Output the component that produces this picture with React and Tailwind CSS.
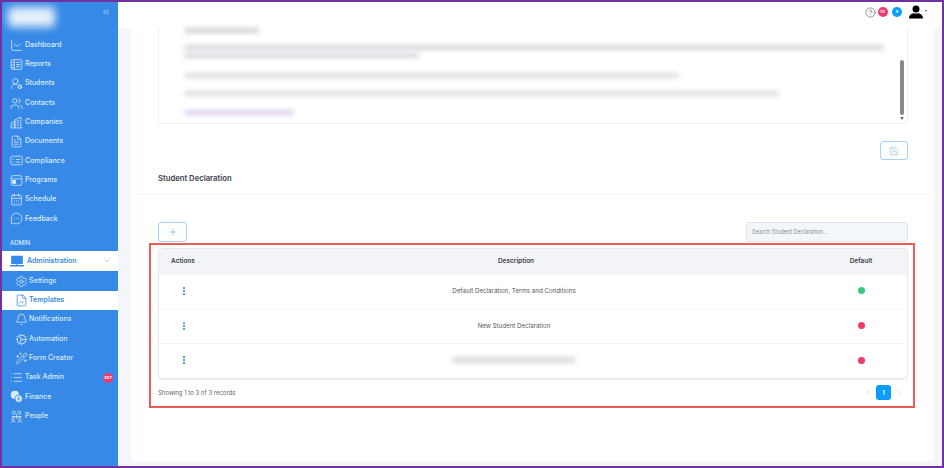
import React from "react";
import {
  Bell,
  CalendarDays,
  ChartLine,
  ChevronDown,
  ChevronLeft,
  ChevronRight,
  ChevronsLeft,
  ChevronUp,
  CircleHelp,
  Cog,
  FileChartLine,
  FileText,
  List,
  MessageCircleMore,
  Plus,
  Save,
  Settings,
  UserRoundCog,
  Users,
  WandSparkles,
} from "lucide-react";

// icons the packages don't have in the same shape
const ReportsIcon = ({ size, strokeWidth, className }) => (
  <svg width={size} height={size} viewBox="0 0 24 24" fill="none" stroke="currentColor" strokeWidth={strokeWidth} className={className}>
    <rect x="2" y="3" width="20" height="18" rx="2.5" />
    <path d="M8 3v18M2 8h6M2 13h6M2 18h6M11 8h8M11 12h8M11 16h8" />
  </svg>
);

const CompanyIcon = ({ size, strokeWidth, className }) => (
  <svg width={size} height={size} viewBox="0 0 24 24" fill="none" stroke="currentColor" strokeWidth={strokeWidth} className={className}>
    <path d="M2 22V13l7-4v13M9 22V7l11-5v20M1 22h22" />
    <path d="M4.500 15h2M4.500 18h2M12 9h5M12 13h5M12 17h5" />
  </svg>
);

const ComplianceIcon = ({ size, strokeWidth, className }) => (
  <svg width={size} height={size} viewBox="0 0 24 24" fill="none" stroke="currentColor" strokeWidth={strokeWidth} className={className}>
    <rect x="1.500" y="4" width="21" height="16" rx="3" />
    <path d="M5 9.500l1 1 2-2M5 15l1 1 2-2M11 10h8M11 15h8" />
  </svg>
);

const ProgramsIcon = ({ size, strokeWidth, className }) => (
  <svg width={size} height={size} viewBox="0 0 24 24" fill="none" stroke="currentColor" strokeWidth={strokeWidth} className={className}>
    <rect x="2" y="3" width="20" height="18" rx="4" />
    <path d="M2 9h20" />
    <path d="M4 11h7v7H4z" fill="currentColor" stroke="none" />
  </svg>
);

const MonitorIcon = ({ size, className }) => (
  <svg width={size} height={size} viewBox="0 0 24 24" className={className}>
    <rect x="2" y="3" width="20" height="14" rx="1.500" fill="currentColor" />
    <path d="M1 20h22" stroke="currentColor" strokeWidth="2.500" strokeLinecap="round" />
    <path d="M12 17v3" stroke="currentColor" strokeWidth="2" />
  </svg>
);

const CoinsIcon = ({ size, className }) => (
  <svg width={size} height={size} viewBox="0 0 24 24" className={className}>
    <circle cx="9" cy="9" r="7.500" fill="currentColor" />
    <circle cx="16" cy="16" r="7" fill="currentColor" stroke="#3689e6" strokeWidth="1.500" />
    <path d="M16 12v8M14 14.500h3.500M14 17.500h3.500" stroke="#3689e6" strokeWidth="1.300" />
  </svg>
);

const PeopleIcon = ({ size, strokeWidth, className }) => (
  <svg width={size} height={size} viewBox="0 0 24 24" fill="none" stroke="currentColor" strokeWidth={strokeWidth} className={className}>
    <circle cx="7" cy="5" r="3" />
    <circle cx="17" cy="5" r="3" />
    <path d="M3 12h18M12 8v8" />
    <circle cx="6" cy="16" r="2.500" />
    <circle cx="18" cy="16" r="2.500" />
    <path d="M2 23c0-3 8-3 8 0M14 23c0-3 8-3 8 0" />
  </svg>
);

const PersonIcon = ({ size, className }) => (
  <svg width={size} height={size} viewBox="0 0 24 24" fill="currentColor" className={className}>
    <circle cx="12" cy="7" r="6" />
    <path d="M0 23c0-6 4-8 8-9 2 1 6 1 8 0 4 1 8 3 8 9z" />
  </svg>
);

const mainMenu = [
  { label: "Dashboard", icon: ChartLine },
  { label: "Reports", icon: ReportsIcon },
  { label: "Students", icon: UserRoundCog },
  { label: "Contacts", icon: Users },
  { label: "Companies", icon: CompanyIcon },
  { label: "Documents", icon: FileText },
  { label: "Compliance", icon: ComplianceIcon },
  { label: "Programs", icon: ProgramsIcon },
  { label: "Schedule", icon: CalendarDays },
  { label: "Feedback", icon: MessageCircleMore },
];

const adminMenu = [
  { label: "Settings", icon: Settings },
  { label: "Templates", icon: FileChartLine, active: true },
  { label: "Notifications", icon: Bell },
  { label: "Automation", icon: Cog },
  { label: "Form Creator", icon: WandSparkles },
];

const bottomMenu = [
  { label: "Task Admin", icon: List, badge: "287" },
  { label: "Finance", icon: CoinsIcon },
  { label: "People", icon: PeopleIcon },
];

const rows = [
  { text: "Default Declaration, Terms and Conditions", on: true },
  { text: "New Student Declaration", on: false },
  { text: "", on: false },
];

const MenuRow = ({ item }) => {
  const Icon = item.icon;
  return (
    <div className="flex h-[19.3px] items-center pl-[8px] pr-[5px] text-[#dcebfb]">
      <Icon size={13} strokeWidth={1.4} className="mr-[2px] w-[13px] shrink-0" />
      <span className="flex-1">{item.label}</span>
      {item.badge ? (
        <span className="flex h-[10px] w-[10px] items-center justify-center rounded-full bg-[#f0386b] text-[4px] font-bold text-white">
          {item.badge}
        </span>
      ) : null}
    </div>
  );
};

const SubRow = ({ item }) => {
  const Icon = item.icon;
  return (
    <div
      className={`flex h-[19.3px] items-center pl-[13px] ${
        item.active ? "bg-white font-semibold text-[#3689e6]" : "text-[#dcebfb]"
      }`}
    >
      <Icon size={13} strokeWidth={1.4} className="mr-[1px] shrink-0" />
      <span>{item.label}</span>
    </div>
  );
};

const Sidebar = () => (
  <aside className="flex w-[116px] shrink-0 flex-col bg-[#3689e6] text-[7px] font-medium">
    <div className="flex h-[33.500px] items-center justify-between pl-[6px] pr-[7px] text-[#dcebfb]">
      <div className="-mt-[3px] h-[20px] w-[47px] rounded-sm bg-[#e6f0fb] blur-[4px]" />
      <ChevronsLeft size={10} strokeWidth={1.8} className="-mt-[14px]" />
    </div>
    <div>
      {mainMenu.map((item) => (
        <MenuRow key={item.label} item={item} />
      ))}
    </div>
    <div className="mt-[10px] pl-[8px] text-[6px] leading-[9px] text-[#dcebfb]">ADMIN</div>
    <div className="mt-[4px] flex h-[20px] items-center bg-white pl-[8px] pr-[7px] font-semibold text-[#3689e6]">
      <MonitorIcon size={14} className="mr-[3px] shrink-0" />
      <span className="flex-1">Administration</span>
      <ChevronDown size={8} className="text-[#9db4cc]" />
    </div>
    <div>
      {adminMenu.map((item) => (
        <SubRow key={item.label} item={item} />
      ))}
    </div>
    <div>
      {bottomMenu.map((item) => (
        <MenuRow key={item.label} item={item} />
      ))}
    </div>
  </aside>
);

const Topbar = () => (
  <header className="flex h-[26px] shrink-0 items-center justify-end gap-[1.5px] bg-white pb-[6px] pr-[15px]">
    <CircleHelp size={11} strokeWidth={1.3} className="text-[#555]" />
    <span className="flex h-[10px] w-[10px] items-center justify-center rounded-full bg-[#f0386b] text-[4px] font-bold text-white">
      70
    </span>
    <span className="ml-[3px] flex h-[10px] w-[10px] items-center justify-center rounded-full bg-[#0b9dfb] text-[4px] font-bold text-white">
      8
    </span>
    <PersonIcon size={14} className="ml-[5px] text-black" />
    <span className="mb-[3px] ml-[1px] h-0 w-0 border-x-[1.5px] border-t-[2px] border-x-transparent border-t-[#555]" />
  </header>
);

const BlurLine = ({ className }) => <div className={`h-[5px] rounded-sm blur-[2.5px] ${className}`} />;

const EditorBox = () => (
  <div className="relative h-[96px] shrink-0 rounded-b border border-t-0 border-[#eef0f3] pl-[25px]">
    <BlurLine className="mt-[0px] w-[75px] bg-[#d0d0d6]" />
    <BlurLine className="mt-[12px] w-[700px] bg-[#d6d6dc]" />
    <BlurLine className="mt-[3px] w-[235px] bg-[#d6d6dc]" />
    <BlurLine className="mt-[15px] w-[495px] bg-[#dcdde2]" />
    <BlurLine className="mt-[13px] w-[595px] bg-[#dcdde2]" />
    <BlurLine className="mt-[14px] w-[110px] bg-[#dfcff0]" />
    <div className="absolute right-[3px] top-[32px] h-[55px] w-[4px] rounded-full bg-[#8a8a8a]" />
    <div className="absolute bottom-[3px] right-[3px] h-0 w-0 border-x-[2px] border-t-[3px] border-x-transparent border-t-[#777]" />
  </div>
);

const DeclarationTable = () => (
  <div className="-ml-[9px] -mr-[7px] mt-[1px] h-[165px] border-2 border-[#ee5a55] pl-[7px] pr-[5px] pt-[3px]">
    <div className="overflow-hidden rounded border border-[#e6e8ec] shadow-[0_1px_1px_rgba(0,0,0,0.06)]">
      <div className="grid h-[25px] grid-cols-[58px_1fr_92px] items-center bg-[#f4f5f8] text-[6.500px] font-semibold text-[#3b3f4a]">
        <div className="flex items-center pl-[12px]">
          Actions
          <ChevronUp size={6} className="ml-[2px] text-[#b5b8c0]" />
        </div>
        <div className="text-center">Description</div>
        <div className="text-center">Default</div>
      </div>
      {rows.map((row, index) => (
        <div
          key={index}
          className="grid h-[34.7px] grid-cols-[58px_1fr_92px] items-center border-t border-[#f3f4f6] pb-[2px] text-[6.200px] text-[#55585f]"
        >
          <div className="flex flex-col gap-[1px] pl-[24px]">
            <span className="h-[2px] w-[2px] bg-[#5aa5ef]" />
            <span className="h-[2px] w-[2px] bg-[#5aa5ef]" />
            <span className="h-[2px] w-[2px] bg-[#5aa5ef]" />
          </div>
          <div className="flex justify-center pr-[4px]">
            {row.text ? (
              <span>{row.text}</span>
            ) : (
              <div className="h-[6px] w-[124px] rounded-sm bg-[#dcdce0] blur-[2.5px]" />
            )}
          </div>
          <div className="flex justify-center pl-[1px]">
            <span
              className={`h-[7px] w-[7px] rounded-full ${
                row.on ? "bg-[#3dc47e]" : "bg-[#f0386b]"
              }`}
            />
          </div>
        </div>
      ))}
    </div>
    <div className="mt-[6px] flex items-center justify-between">
      <span className="text-[6px] text-[#5b5f6a]">Showing 1 to 3 of 3 records</span>
      <div className="flex items-center gap-[5px] pr-[5px] text-[#c3c6cc]">
        <ChevronLeft size={7} />
        <span className="flex h-[15px] w-[15px] items-center justify-center rounded-[3px] bg-[#0b9dfb] text-[6px] font-semibold text-white">
          1
        </span>
        <ChevronRight size={7} />
      </div>
    </div>
  </div>
);

const App = () => (
  <div
    className="flex h-[468px] w-[944px] overflow-hidden border-2 border-[#7030a0] bg-[#f3f7fb]"
    style={{ fontFamily: '"Inter", "Liberation Sans", sans-serif' }}
  >
    <Sidebar />
    <div className="flex min-w-0 flex-1 flex-col">
      <Topbar />
      <main className="mb-[5px] ml-[13px] mr-[8px] flex flex-1 flex-col rounded-b bg-white pl-[27px] pr-[26px]">
        <EditorBox />
        <div className="mt-[17px] flex justify-end">
          <button className="flex h-[19px] w-[28px] items-center justify-center rounded-[3px] border border-[#a9d0f5] text-[#8fc0ef]">
            <Save size={10} strokeWidth={1.4} />
          </button>
        </div>
        <h3 className="mt-[13px] text-[7.700px] font-semibold leading-[12px] text-[#3b3f4a]">Student Declaration</h3>
        <div className="-mx-[27px] mt-[9px] border-t border-[#f6f6f8]" />
        <div className="mt-[27px] flex items-center justify-between">
          <button className="flex h-[20px] w-[29px] items-center justify-center rounded-[3px] border border-[#a9d0f5] text-[#5da8ee]">
            <Plus size={10} strokeWidth={1.4} />
          </button>
          <div className="flex h-[20px] w-[162px] items-center rounded-[3px] border border-[#dfe3e8] bg-[#f3f6fa] pl-[5px] text-[5.500px] text-[#8b8f9a]">
            Search Student Declaration...
          </div>
        </div>
        <DeclarationTable />
      </main>
    </div>
  </div>
);

export default App;
